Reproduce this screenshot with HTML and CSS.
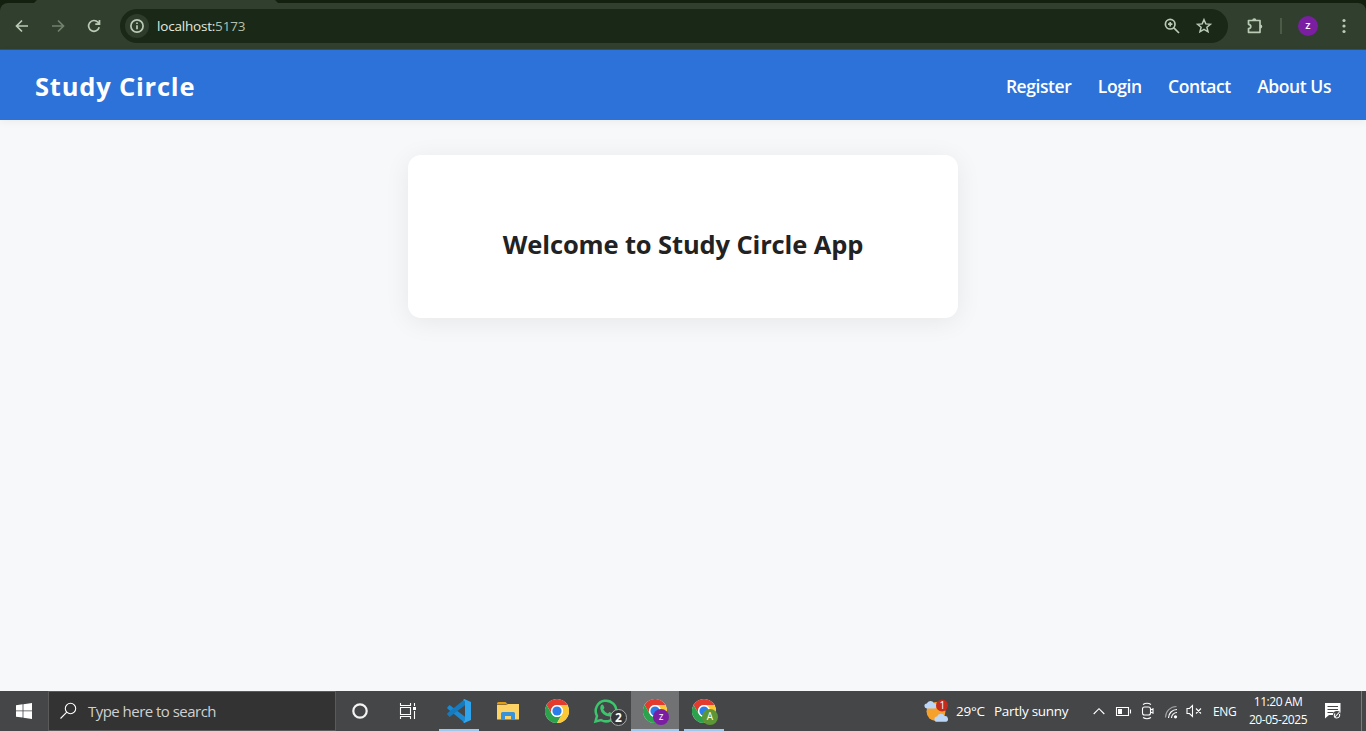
FILE: index.html
```html
<!DOCTYPE html>
<html lang="en">
<head>
<meta charset="utf-8">
<title>Study Circle</title>
<link rel="stylesheet" href="styles.css">
</head>
<body>
<svg class="defs" width="0" height="0" aria-hidden="true">
  <symbol id="chrome" viewBox="0 0 24 24">
    <circle cx="12" cy="12" r="12" fill="#fff"/>
    <path d="M12 6h10.4A12 12 0 0 0 1.6 6l5.2 9A6 6 0 0 1 12 6z" fill="#e33b2e"/>
    <path d="M6.8 15 1.6 6A12 12 0 0 0 12 24l5.2-9a6 6 0 0 1-10.4 0z" fill="#2ba24c"/>
    <path d="M17.2 15 12 24A12 12 0 0 0 22.4 6H12a6 6 0 0 1 5.2 9z" fill="#fcc934"/>
    <circle cx="12" cy="12" r="5.900" fill="#fff"/>
    <circle cx="12" cy="12" r="4.600" fill="#2b7de9"/>
  </symbol>
  <symbol id="cloud" viewBox="0 0 14 8">
    <path d="M3 8a2.500 2.500 0 0 1-.2-5A4 4 0 0 1 10 2.700a2.700 2.700 0 0 1 1 5.300z" fill="#bcd6f8"/>
  </symbol>
</svg>

<header class="browser">
  <div class="tabstrip"><div class="active-tab"></div></div>
  <div class="toolbar">
    <div class="nav-buttons">
      <svg width="16" height="16" viewBox="0 0 16 16"><path d="M14 8H3M8 2.500 2.500 8 8 13.500" class="line"/></svg>
      <svg width="16" height="16" viewBox="0 0 16 16" class="dim"><path d="M2 8h11M8 2.500 13.500 8 8 13.500" class="line"/></svg>
      <svg width="16" height="16" viewBox="0 0 16 16"><path d="M13.200 9.300A5.400 5.400 0 1 1 12 4.300l1.300 1.500M13.500 2v4.200H9.300" class="line"/></svg>
    </div>
    <div class="omnibox">
      <span class="site-info"><svg width="14" height="14" viewBox="0 0 14 14"><circle cx="7" cy="7" r="6.100" class="line"/><path d="M7 6.300V10.300M7 3.600V5.100" class="line"/></svg></span>
      <span class="url">localhost:<span class="port">5173</span></span>
      <svg width="16" height="16" viewBox="0 0 16 16"><circle cx="6.200" cy="6.200" r="4.800" class="line"/><path d="M9.600 9.600 15 15" class="line"/><path d="M6.200 4v4.400M4 6.200h4.400" class="line"/></svg>
      <svg width="16" height="16" viewBox="0 0 16 16"><path d="m8 1.700 1.800 4.200 4.600.4-3.500 3 1.100 4.500L8 11.400l-4 2.400 1.100-4.500-3.500-3 4.600-.4z" class="line thin"/></svg>
    </div>
    <svg class="puzzle" width="18" height="18" viewBox="0 0 18 18"><path d="M2.500 3.500h11.500v11.800H2.500v-3.600q2.300-.3 2.300-2.200T2.500 7.300z" class="line" stroke-linejoin="round"/><path d="M6.200 3.500a2.100 2.300 0 0 1 4.200 0zM14 7.500a2.300 2.100 0 0 1 0 4.200z" fill="#bacbb5"/></svg>
    <span class="separator"></span>
    <span class="avatar">z</span>
    <svg class="kebab" width="4" height="16" viewBox="0 0 4 16" fill="#bacbb5"><circle cx="2" cy="2.500" r="1.600"/><circle cx="2" cy="8" r="1.600"/><circle cx="2" cy="13.500" r="1.600"/></svg>
  </div>
</header>

<div class="page">
  <nav class="navbar">
    <div class="brand">Study Circle</div>
    <div class="links"><a>Register</a><a>Login</a><a>Contact</a><a>About Us</a></div>
  </nav>
  <main class="card"><h1>Welcome to Study Circle App</h1></main>
</div>

<footer class="taskbar">
  <div class="start"><svg width="16" height="16" viewBox="0 0 16 16" fill="#fff"><path d="M0 2.200 6.600 1.300v6.200H0zM7.400 1.200 16 0v7.500H7.400zM0 8.300h6.600v6.300L0 13.700zM7.400 8.300H16V16l-8.600-1.200z"/></svg></div>
  <div class="search">
    <svg width="18" height="18" viewBox="0 0 18 18"><circle cx="10.500" cy="6.500" r="5.200" class="white"/><path d="M6.800 10.200.5 16.500" class="white"/></svg>
    <span>Type here to search</span>
  </div>
  <div class="apps">
    <div class="app small"><svg width="16" height="16" viewBox="0 0 16 16"><circle cx="8" cy="8" r="6.700" fill="none" stroke="#f4f4f4" stroke-width="2.200"/></svg></div>
    <div class="app small task-view"><svg width="18" height="16" viewBox="0 0 18 16"><path d="M1.500 0v2.500h10V0M1.500 16v-2.500h10V16M1.500 4.500h10v7h-10zM15.500 0v3M15.500 8v8" class="white"/><path d="M14 4h3v3h-3z" fill="#fff"/></svg></div>
    <div class="app open"><svg width="24" height="24" viewBox="0 0 24 24"><path d="M.3 8.300 2.600 6 18 17.800V24L.3 9.600z" fill="#1b8ad3"/><path d="M.3 15.500 2.600 18 18 6.200V0L.3 14.300z" fill="#167abf"/><path d="M17.300 0 24 3v18l-6.700 3-1.300-1 2-1.500v-19L16 1z" fill="#2fa4ec"/></svg></div>
    <div class="app"><svg width="22" height="18" viewBox="0 0 22 18"><path d="M0 1.500Q0 0 1.500 0h7L11 2.500H0z" fill="#e59e12"/><path d="M0 3h9l2-1h11v15.500H0z" fill="#fdd365"/><path d="M4 18v-6.500Q4 10 5.500 10h11q1.500 0 1.500 1.500V18h-4v-4H8v4z" fill="#3a92d8"/></svg></div>
    <div class="app"><svg width="24" height="24"><use href="#chrome"/></svg></div>
    <div class="app"><div class="badged whatsapp"><svg width="26" height="26" viewBox="0 0 26 26"><path d="m2.500 23.500 1.500-5.500A10.300 10.300 0 1 1 8 22z" fill="none" stroke="#3bc56c" stroke-width="2.500"/><path d="M8.200 7q1-1 2 0l1.200 2.500q.2.700-1.100 2 1.700 3 4.500 4.100l1.700-1.700 2.700 1.400q.8 3-2.700 3.200Q8.500 17.500 7.200 10.500 7.200 8 8.200 7z" fill="#3bc56c"/></svg><span class="badge count">2</span></div></div>
    <div class="app open active"><div class="badged"><svg width="24" height="24"><use href="#chrome"/></svg><span class="badge purple">z</span></div></div>
    <div class="app open"><div class="badged"><svg width="24" height="24"><use href="#chrome"/></svg><span class="badge green">A</span></div></div>
  </div>
  <div class="weather">
    <svg width="26" height="24" viewBox="0 0 26 24"><circle cx="12" cy="12.500" r="9.500" fill="#f6a12c"/><use href="#cloud" x="0" y="1" width="14" height="9"/><use href="#cloud" x="10" y="14" width="15" height="9"/><circle cx="18" cy="6.500" r="6" fill="#c42b1c"/><text x="15.500" y="10" class="notice">1</text></svg>
    <span class="temp">29°C</span><span class="sky">Partly sunny</span>
  </div>
  <div class="tray">
    <svg width="12" height="16" viewBox="0 0 12 16"><path d="m.7 11 5.300-5.300L11.300 11" class="white"/></svg>
    <svg width="16" height="16" viewBox="0 0 16 16"><path d="M1.500 4.500h12v8h-12zM15.500 6.500v4" class="white"/><path d="M3 6h4v5H3z" fill="#fff"/></svg>
    <svg width="14" height="18" viewBox="0 0 14 18"><path d="M3 2.500q4-2.500 8 0M3 15.500q4 2.500 8 0M4.500 5h4Q10.500 5 10.500 7v4q0 2-2 2h-4q-2 0-2-2V7q0-2 2-2zM10.500 8 13 6.800v4.400L10.500 10" class="white"/></svg>
    <svg class="wifi" width="14" height="14" viewBox="0 0 14 14"><path d="M1.500 12.500A11 11 0 0 1 12.500 1.500" class="white faded"/><path d="M4.500 13A8.500 8.500 0 0 1 13 4.500M7.500 13A5.500 5.500 0 0 1 13 7.500" class="white"/><circle cx="11.500" cy="11.800" r="1.600" fill="#fff"/></svg>
    <svg width="16" height="16" viewBox="0 0 16 16"><path d="M1 5.500h2.500L6.500 2.500v11l-3-3H1zM10 5.500l5 5M15 5.500l-5 5" class="white"/></svg>
    <span class="lang">ENG</span>
    <div class="clock"><span class="time">11:20 AM</span><span class="date">20-05-2025</span></div>
    <svg class="notes" width="18" height="18" viewBox="0 0 18 18"><path d="M1 1h15.500v12H5l-4 3.500z" fill="#fff"/><path d="M3.500 4.500H14M3.500 7.500H14M3.500 10.500h6" stroke="#444648"/><circle cx="13" cy="13" r="4" fill="#444648"/><path d="M10.500 15.500 15.500 10M11 11.500q-2 4 1.500 4.500 4-.5 3-4" class="white"/></svg>
    <span class="desktop-peek"></span>
  </div>
</footer>
</body>
</html>
```
FILE: styles.css
```css
* { box-sizing: border-box; }
body { margin: 0; width: 1366px; height: 731px; overflow: hidden; display: flex; flex-direction: column; background: #f6f8fa; font-family: "Open Sans", "Noto Sans", sans-serif; }
svg { display: block; flex: none; overflow: visible; }
.defs { position: absolute; }
span, a, .brand, h1 { white-space: nowrap; }

.line { fill: none; stroke: #bacbb5; stroke-width: 1.7; }
.thin { stroke-width: 1.5; }
.dim { opacity: .48; }
.white { fill: none; stroke: #fff; stroke-width: 1.1; }
.faded { opacity: .5; }

.browser { height: 50px; flex: none; background: #14200f; }
.tabstrip { height: 3px; padding-left: 34px; }
.active-tab { width: 244px; height: 3px; background: #313f2e; clip-path: polygon(3px 0, 241px 0, 100% 100%, 0 100%); }
.toolbar { height: 47px; display: flex; align-items: center; background: #313f2e; border-radius: 8px 8px 0 0; border-bottom: 1px solid #40503e; }
.nav-buttons { display: flex; gap: 20px; padding-left: 14px; width: 120px; }
.omnibox { width: 1108px; height: 34px; display: flex; align-items: center; padding: 0 16px 0 5px; border-radius: 17px; background: #1a2818; gap: 16px; }
.site-info { width: 24px; height: 24px; display: grid; place-items: center; border-radius: 50%; background: #2d3c2b; }
.url { flex: 1; margin-left: -8px; font-size: 13.500px; letter-spacing: -.2px; color: #e3ecdf; }
.port { color: #b2c0ae; }
.puzzle { margin-left: 18px; }
.separator { width: 2px; height: 16px; background: #4a5b46; margin: 0 16px; }
.avatar { width: 20px; height: 20px; border-radius: 50%; background: #7b1fa2; color: #fff; font-size: 11px; font-weight: 600; line-height: 18px; text-align: center; }
.kebab { margin-left: 24px; }

.page { height: 641px; flex: none; background: #f6f8fa; }
.navbar { height: 70px; display: flex; align-items: center; justify-content: space-between; padding: 3px 35px 1px; background: #2d72d9; color: #fff; box-shadow: 0 2px 8px rgba(0,0,0,.05); }
.brand { font-size: 25.500px; font-weight: 700; letter-spacing: .8px; line-height: 34px; }
.links { display: flex; gap: 26.500px; font-size: 17.500px; font-weight: 600; line-height: 26px; }
.links a { letter-spacing: -.43px; }
.card { width: 550px; height: 163px; margin: 35px auto 0; padding-top: 71px; background: #fff; border-radius: 13px; box-shadow: 0 4px 26px rgba(0,0,0,.07); text-align: center; }
.card h1 { margin: 0; font-size: 25.500px; line-height: 36px; font-weight: 700; letter-spacing: -.13px; color: #222; }

.taskbar { height: 40px; flex: none; display: flex; background: #444648; color: #fff; }
.start { width: 48px; display: grid; place-items: center; }
.search { width: 288px; display: flex; align-items: center; gap: 10px; padding-left: 11px; background: #333; border: 1px solid #5a5a5a; color: #d0d0d0; font-size: 15px; letter-spacing: -.53px; }
.apps { display: flex; }
.app { position: relative; width: 49px; display: grid; place-items: center; padding-right: 1px; }
.app.small { width: 48px; padding-right: 0; }
.app.task-view { width: 51px; padding-right: 3px; }
.open::after { content: ""; position: absolute; bottom: 0; left: 4px; width: 40px; height: 2px; background: #9bc9ef; }
.active { background: #707274; width: 48px; margin-right: 1px; padding: 0; }
.active::after { left: 0; width: 48px; }
.badged { position: relative; }
.badge { position: absolute; left: 10px; top: 10px; width: 16px; height: 16px; border-radius: 50%; color: #fff; font-size: 10px; line-height: 15px; text-align: center; }
.purple { background: #7b1fa2; }
.green { background: #5c9637; }
.whatsapp .badge { left: 17px; top: 11px; width: 17px; height: 17px; border: 1px solid #aaa; background: #343638; font-size: 12px; line-height: 15px; font-weight: 700; }
.weather { display: flex; align-items: center; margin-left: 195px; width: 169px; font-size: 13.500px; letter-spacing: -.28px; }
.notice { fill: #fff; font-size: 10px; }
.temp { width: 38px; margin-left: 6px; }
.tray { flex: 1; display: flex; align-items: center; gap: 9px; }
.tray svg:first-child { margin-right: 1px; }
.wifi { margin: 2px -1px 0 1px; }
.lang { width: 25px; margin-left: 2px; font-size: 12px; letter-spacing: -.4px; }
.clock { display: flex; flex-direction: column; align-items: center; width: 60px; font-size: 12px; line-height: 18px; letter-spacing: -.45px; margin-left: 1px; }
.notes { margin-left: 7px; }
.desktop-peek { width: 1px; height: 40px; margin-left: auto; margin-right: 4px; background: #797b7d; }
```
